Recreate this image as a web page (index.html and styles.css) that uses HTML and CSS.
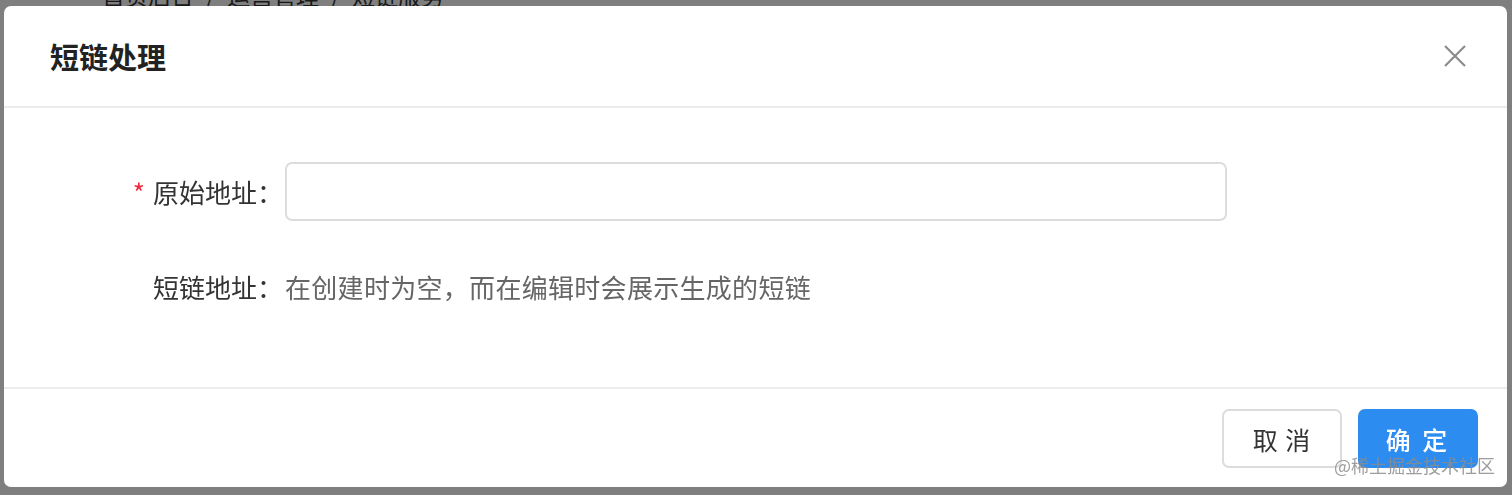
FILE: index.html
```html
<!DOCTYPE html>
<html>
<head>
    <title>短链服务</title>
    <meta charset="utf-8">
    <link rel="stylesheet" href="styles.css">
</head>
<body>

<div class="page">
    <div class="breadcrumb">首页后台<span class="sep">/</span>运营管理<span class="sep">/</span>短链服务</div>
</div>

<div class="mask">
    <div class="dialog">
        <div class="dialog-header">
            <span class="dialog-title">短链处理</span>
            <svg class="dialog-close" width="22" height="22" viewBox="0 0 22 22">
                <path d="M1 1 L21 21 M21 1 L1 21" stroke="#8c8c8c" stroke-width="2.2" fill="none"/>
            </svg>
        </div>
        <div class="dialog-body">
            <div class="form-row">
                <label class="form-label"><span class="required">*</span>原始地址：</label>
                <input class="form-input" type="text">
            </div>
            <div class="form-row">
                <label class="form-label">短链地址：</label>
                <span class="form-text">在创建时为空，而在编辑时会展示生成的短链</span>
            </div>
        </div>
        <div class="dialog-footer">
            <button class="btn">取 消</button>
            <button class="btn btn-primary">确 定</button>
        </div>
        <div class="watermark">@稀土掘金技术社区</div>
    </div>
</div>

</body>
</html>
```

FILE: styles.css
```css
body, html {
    margin: 0; padding: 0;
}
body {
    font-family: "Noto Sans CJK SC", "Noto Sans", sans-serif;
    background: #fff;
    height: 495px;
    overflow: hidden;
}
.page {
    padding-left: 102px;
}
.breadcrumb {
    margin-top: -22px;
    font-size: 23px;
    line-height: 34px;
    color: #333;
}
.breadcrumb .sep {
    margin: 0 12px;
}
.mask {
    position: fixed;
    top: 0;
    left: 0;
    right: 0;
    bottom: 0;
    background: rgba(0, 0, 0, 0.5);
    padding: 6px 5px 8px 4px;
}
.dialog {
    position: relative;
    background: #fff;
    border-radius: 7px;
    height: 481px;
    display: flex;
    flex-direction: column;
}
.dialog-header {
    height: 100px;
    display: flex;
    align-items: center;
    justify-content: space-between;
    padding: 0 41px 0 46px;
    border-bottom: 2px solid #ececec;
}
.dialog-title {
    font-size: 29px;
    font-weight: bold;
    color: #222;
    margin-top: -1px;
}
.dialog-close {
    margin-top: 0;
}
.dialog-body {
    flex: 1;
    padding-top: 54px;
    border-bottom: 2px solid #ececec;
}
.form-row {
    display: flex;
    align-items: center;
    height: 59px;
    margin-bottom: 36px;
}
.form-label {
    width: 281px;
    text-align: right;
    font-size: 26px;
    color: #333;
    box-sizing: border-box;
    padding-right: 2px;
}
.required {
    color: #f0283c;
    margin-right: 8px;
}
.form-input {
    width: 942px;
    height: 59px;
    box-sizing: border-box;
    border: 2px solid #dcdcdc;
    border-radius: 7px;
    outline: 0 none;
    margin: 0;
    padding: 0 12px;
    font-size: 26px;
}
.form-text {
    font-size: 26px;
    letter-spacing: 0.3px;
    color: #666;
}
.dialog-footer {
    height: 98px;
    display: flex;
    align-items: center;
    justify-content: flex-end;
    gap: 16px;
    padding-right: 29px;
}
.btn {
    width: 120px;
    height: 59px;
    box-sizing: border-box;
    border: 2px solid #dcdcdc;
    border-radius: 7px;
    background: #fff;
    color: #333;
    font-family: "Noto Sans CJK SC", sans-serif;
    font-size: 25px;
    letter-spacing: 1px;
    padding: 0;
    margin-top: 1px;
}
.btn-primary {
    background: #2d8cf0;
    border-color: #2d8cf0;
    color: #fff;
    font-weight: 500;
    letter-spacing: 3px;
}
.watermark {
    position: absolute;
    right: 12px;
    bottom: 9px;
    font-size: 18px;
    color: rgba(140, 140, 140, 0.85);
    font-family: "Noto Sans CJK SC", sans-serif;
}
```
